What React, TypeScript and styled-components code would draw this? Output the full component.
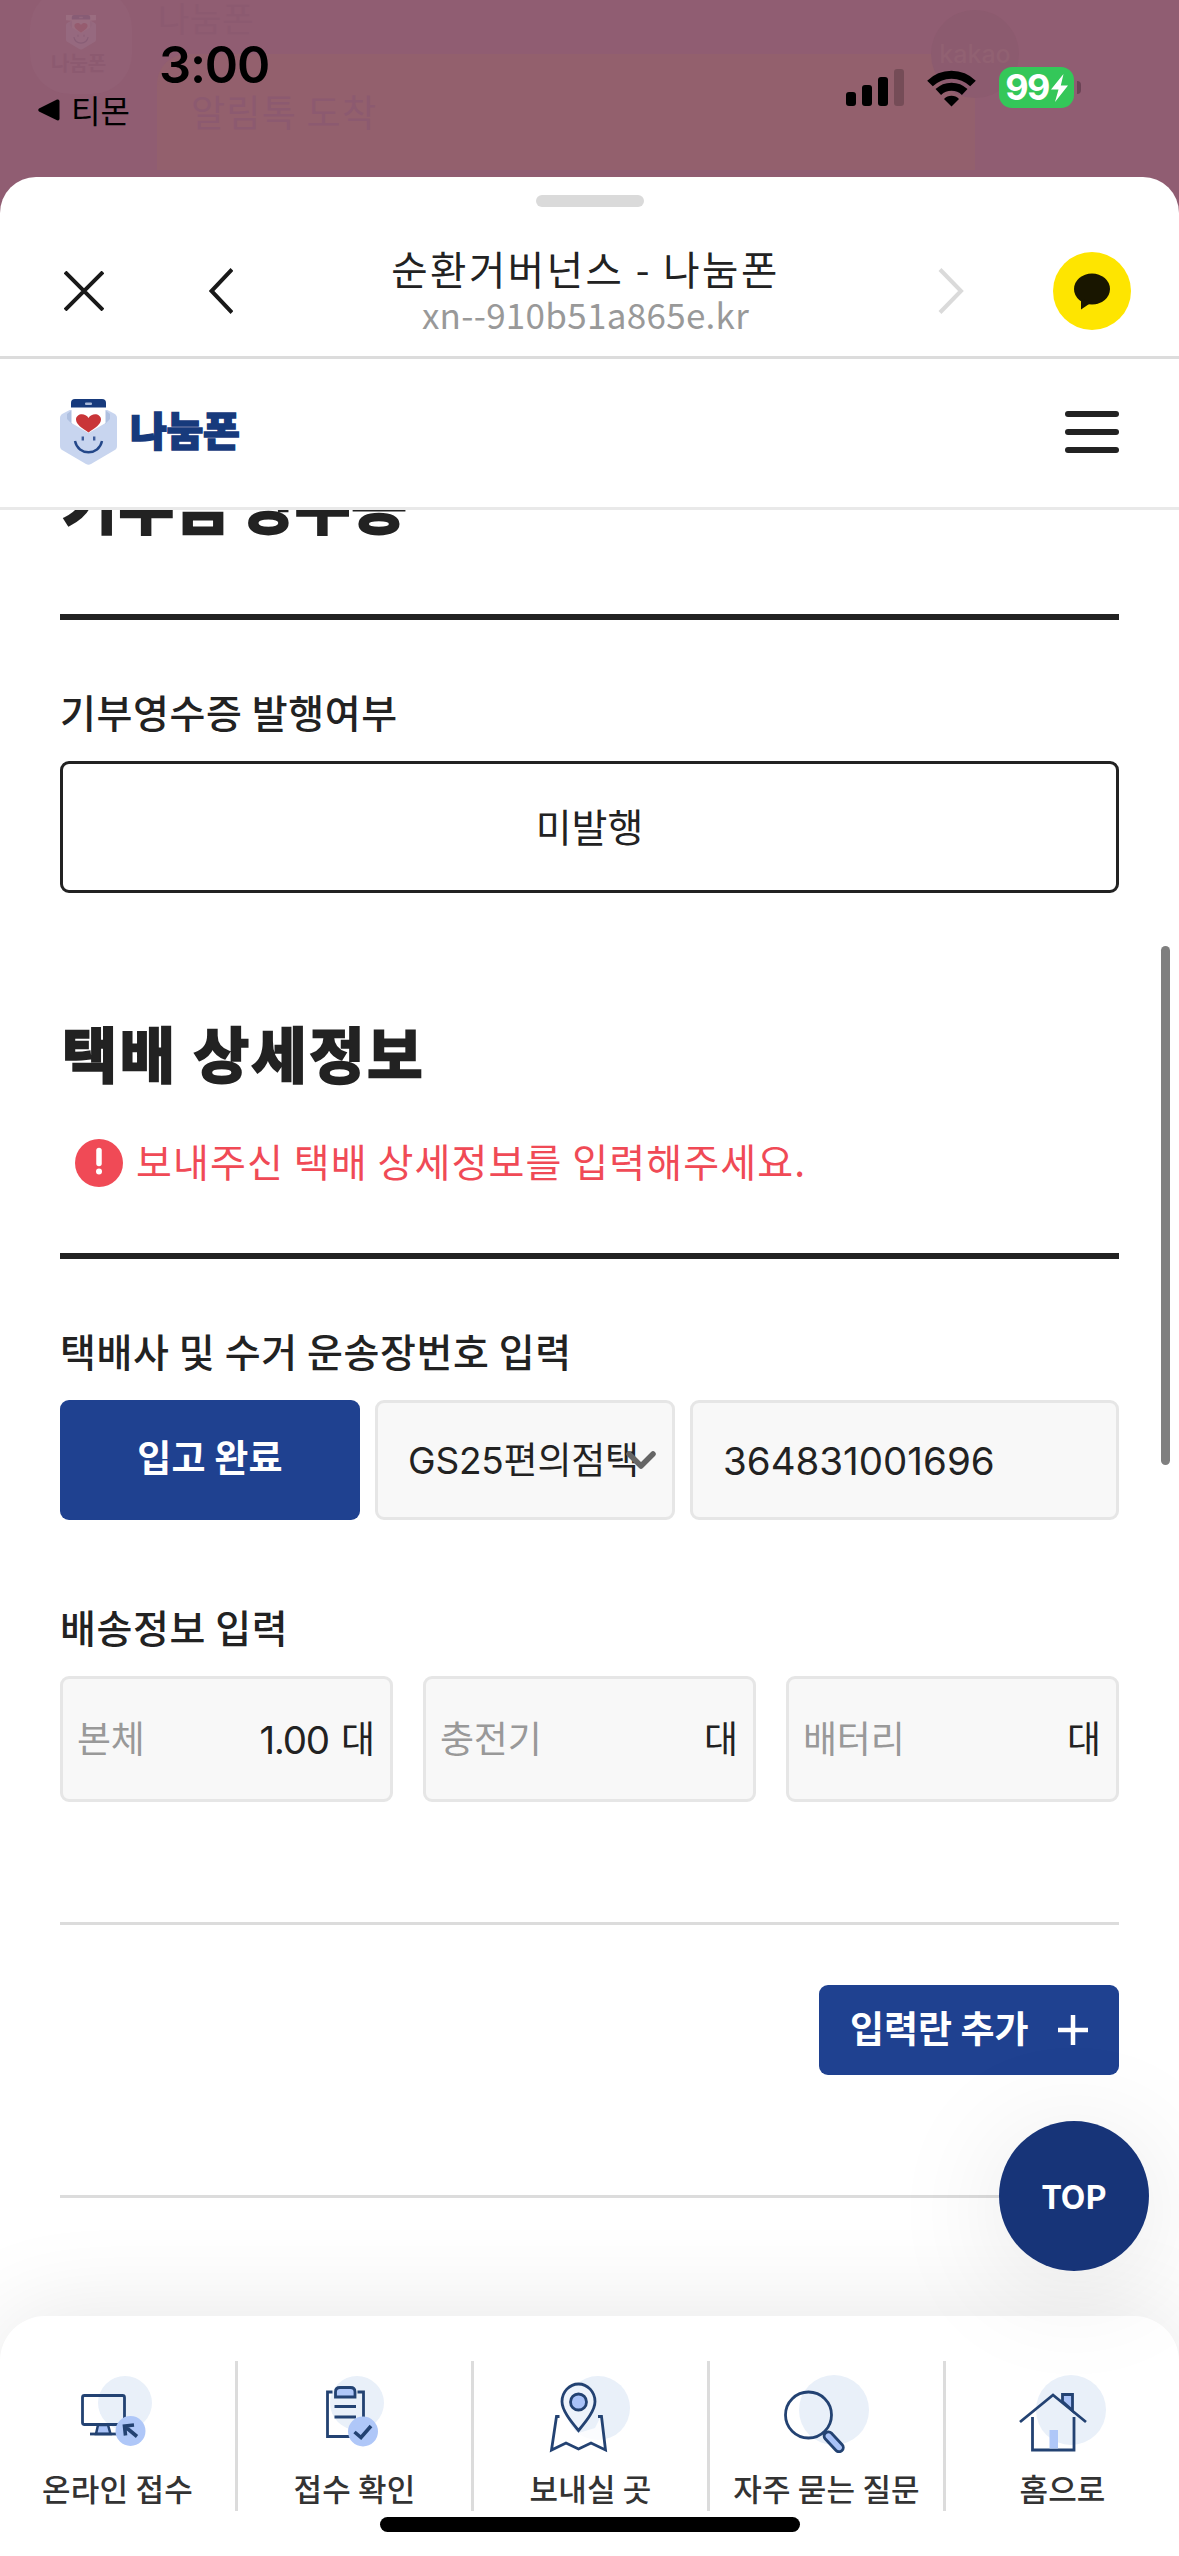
import React from "react";
import styled, { createGlobalStyle } from "styled-components";

const NAVY = "#1f4190";
const INK = "#222222";
const LINE = "#dcdcdc";
const KR = `"Noto Sans CJK KR", "Noto Sans", sans-serif`;
const MIX = `Inter, "Noto Sans CJK KR", sans-serif`;

const GlobalStyle = createGlobalStyle`
  * { box-sizing: border-box; }
  body { margin: 0; background: #905d72; }
  button { font: inherit; border: 0; padding: 0; }
`;

const Screen = styled.div`
  position: relative;
  width: 1179px;
  height: 2556px;
  overflow: hidden;
  background: #905d72;
  color: ${INK};
  font-family: ${KR};
`;

/* Dimmed chat visible behind the sheet */
const Backdrop = styled.div`
  position: absolute;
  inset: 0 0 auto 0;
  height: 260px;
`;
const GhostCard = styled.div`
  position: absolute;
  left: 157px;
  top: 62px;
  width: 818px;
  height: 108px;
  background: #93606d;
  border-radius: 30px 0 0 0;
  box-shadow: 0 -8px 0 #93606d;
`;
const GhostAvatar = styled.div`
  position: absolute;
  left: 30px;
  top: -12px;
  width: 102px;
  height: 106px;
  border-radius: 40px;
  background: #926075;
  svg { position: absolute; left: 36px; top: 27px; opacity: 0.08; }
`;
const GhostBadge = styled.div`
  position: absolute;
  left: 931px;
  top: 10px;
  width: 88px;
  height: 88px;
  border-radius: 50%;
  background: #8c5b6f;
  color: #916172;
  font: 500 25px/88px ${MIX};
  text-align: center;
`;
const GhostText = styled.div<{ $x: number; $y: number; $size: number; $gap?: number; $bold?: boolean }>`
  position: absolute;
  left: ${(p) => p.$x}px;
  top: ${(p) => p.$y}px;
  font-size: ${(p) => p.$size}px;
  line-height: 1;
  font-weight: ${(p) => (p.$bold ? 700 : 400)};
  letter-spacing: ${(p) => p.$gap ?? 0}px;
  color: #8c5a70;
  white-space: nowrap;
`;

const StatusBar = styled.header`
  position: relative;
  height: 177px;
  display: flex;
  justify-content: space-between;
  padding: 0 98px 0 38px;
  color: #000;
`;
const StatusLeft = styled.div`
  display: flex;
  flex-direction: column;
  padding-top: 40px;
`;
const Clock = styled.div`
  padding-left: 121px;
  font: 600 50.5px/50px Inter, sans-serif;
  letter-spacing: -1.2px;
`;
const BackApp = styled.div`
  display: flex;
  align-items: center;
  gap: 11px;
  height: 40px;
  font-size: 32px;
  line-height: 38px;
  span { margin-top: -3px; }
`;
const StatusRight = styled.div`
  display: flex;
  align-items: flex-start;
  padding-top: 67px;
`;
const Signal = styled.div`
  display: flex;
  align-items: flex-end;
  gap: 6px;
  height: 39px;
  margin-right: 22px;
`;
const Bar = styled.i<{ $h: number; $dim?: boolean }>`
  width: 10px;
  height: ${(p) => p.$h}px;
  border-radius: 3px;
  background: #000;
  opacity: ${(p) => (p.$dim ? 0.2 : 1)};
`;
const Battery = styled.div`
  display: flex;
  align-items: center;
  justify-content: center;
  gap: 2px;
  width: 75px;
  height: 41px;
  margin-left: 22px;
  border-radius: 13px;
  background: #34c759;
  color: #fff;
  font: 700 36px/41px Inter, sans-serif;
  letter-spacing: -1.6px;
`;
const BatteryTip = styled.i`
  width: 4px;
  height: 13px;
  margin: 14px 0 0 3px;
  border-radius: 0 4px 4px 0;
  background: #6b4355;
`;

const Sheet = styled.main`
  position: relative;
  height: 2379px;
  background: #fff;
  border-radius: 36px 36px 0 0;
  overflow: hidden;
`;
const BrowserBar = styled.div`
  height: 182px;
  border-bottom: 3px solid ${LINE};
  display: flex;
  flex-direction: column;
`;
const Handle = styled.div`
  width: 108px;
  height: 12px;
  margin: 18px auto 0 536px;
  flex: none;
  border-radius: 6px;
  background: #dadada;
`;
const BrowserRow = styled.div`
  display: grid;
  grid-template-columns: 40px 105px 24px 1fr 26px 89px 77px;
  grid-template-rows: 78px;
  align-items: center;
  height: 78px;
  margin-top: 45px;
  padding: 0 49px 0 64px;
`;
const Titles = styled.div`
  text-align: center;
  margin-top: -3px;
  white-space: nowrap;
`;
const PageTitle = styled.div`
  font-size: 39.5px;
  line-height: 48px;
  letter-spacing: 2.5px;
`;
const PageUrl = styled.div`
  font-family: "Noto Sans CJK KR", sans-serif;
  font-size: 35px;
  line-height: 44px;
  letter-spacing: 0.3px;
  color: #999;
`;
const ShareButton = styled.button`
  display: block;
  width: 78px;
  height: 78px;
  border-radius: 50%;
  background: #fee500;
`;

const SiteHeader = styled.div`
  display: flex;
  align-items: center;
  justify-content: space-between;
  height: 151px;
  padding: 0 60px 3px;
  border-bottom: 3px solid #e9e9e9;
`;
const Brand = styled.div`
  display: flex;
  align-items: center;
  gap: 13px;
`;
const BrandName = styled.span`
  font-size: 40px;
  line-height: 60px;
  font-weight: 900;
  color: #173a7c;
  -webkit-text-stroke: 1.5px #173a7c;
  letter-spacing: -0.3px;
  margin-top: -5px;
`;
const MenuButton = styled.div`
  display: flex;
  flex-direction: column;
  gap: 12px;
  width: 54px;
  i { height: 6px; border-radius: 3px; background: ${INK}; }
`;

const Content = styled.div`
  height: 2046px;
  padding: 0 60px;
  overflow: hidden;
`;
const Heading = styled.h2<{ $top: number; $gap: number; $word?: number }>`
  margin: ${(p) => p.$top}px 0 0;
  padding-left: 2px;
  font-size: 60px;
  line-height: 60px;
  font-weight: 700;
  letter-spacing: ${(p) => p.$gap}px;
  word-spacing: ${(p) => p.$word ?? 0}px;
  -webkit-text-stroke: 2.5px ${INK};
  paint-order: stroke fill;
  stroke-linejoin: round;
`;
const Rule = styled.hr<{ $top: number; $strong?: boolean }>`
  height: ${(p) => (p.$strong ? 6 : 3)}px;
  margin: ${(p) => p.$top}px 0 0;
  border: 0;
  background: ${(p) => (p.$strong ? INK : LINE)};
`;
const Label = styled.div<{ $top: number }>`
  margin: ${(p) => p.$top}px 0 17px;
  height: 60px;
  font: 500 39px/54px ${KR};
  letter-spacing: 0.6px;
  white-space: nowrap;
`;
const Choice = styled.div`
  display: flex;
  align-items: center;
  justify-content: center;
  height: 132px;
  border: 3px solid ${INK};
  border-radius: 9px;
  font-size: 39px;
  line-height: 50px;
  padding-bottom: 5px;
`;
const Notice = styled.div`
  display: flex;
  align-items: center;
  gap: 13px;
  height: 48px;
  margin-top: 57px;
  padding-left: 15px;
  color: #f04a56;
  font-size: 39px;
  letter-spacing: 1.1px;
  white-space: nowrap;
  span { margin-top: -7px; }
`;
const Row = styled.div<{ $columns: string; $gap: number; $height: number }>`
  display: grid;
  grid-template-columns: ${(p) => p.$columns};
  gap: ${(p) => p.$gap}px;
  height: ${(p) => p.$height}px;
`;
const Primary = styled.button`
  display: flex;
  align-items: center;
  justify-content: center;
  border-radius: 9px;
  background: ${NAVY};
  color: #fff;
  font: 700 37px/48px ${KR};
  letter-spacing: 0.2px;
  padding-bottom: 8px;
`;
const Field = styled.div<{ $pad: number }>`
  display: flex;
  align-items: center;
  padding: 2px ${(p) => p.$pad}px 0;
  border: 3px solid #e6e6e6;
  border-radius: 9px;
  background: #f8f8f8;
  font: 400 37px/48px ${MIX};
  white-space: nowrap;
`;
const Selected = styled.span`
  letter-spacing: -0.2px;
`;
const SelectArrow = styled.svg`
  flex: none;
  margin-left: -13px;
`;
const Digits = styled.span<{ $gap: number }>`
  font-size: 38.5px;
  letter-spacing: ${(p) => p.$gap}px;
`;
const Hint = styled.span`
  flex: 1;
  color: #999;
  letter-spacing: -0.2px;
`;
const Unit = styled.span`
  margin: 0 1px 0 12px;
`;
const AddRow = styled.div`
  display: flex;
  justify-content: flex-end;
  margin-top: 60px;
`;
const AddButton = styled.button`
  display: flex;
  align-items: center;
  justify-content: space-between;
  width: 300px;
  height: 90px;
  padding: 0 31px;
  border-radius: 9px;
  background: ${NAVY};
  color: #fff;
  font: 700 37px/48px ${KR};
  white-space: nowrap;
  span { margin-top: -6px; }
`;

const ScrollThumb = styled.div`
  position: absolute;
  right: 9px;
  top: 946px;
  width: 9px;
  height: 519px;
  border-radius: 5px;
  background: #7f7f7f;
`;
const TopButton = styled.button`
  position: absolute;
  right: 30px;
  top: 2121px;
  width: 150px;
  height: 150px;
  border-radius: 50%;
  background: #173478;
  box-shadow: 0 15px 120px rgba(0, 0, 0, 0.1);
  color: #fff;
  font: 700 32.5px/148px "Noto Sans CJK KR", sans-serif;
  letter-spacing: -0.4px;
  padding-bottom: 2px;
`;
const TabBar = styled.nav`
  position: absolute;
  left: 0;
  right: 0;
  bottom: 0;
  height: 240px;
  padding-top: 45px;
  display: grid;
  grid-template-columns: 238px 236px 236px 236px 233px;
  background: #fff;
  border-radius: 45px 45px 0 0;
  box-shadow: 0 0 100px rgba(0, 0, 0, 0.1);
`;
const Tab = styled.div<{ $shift: number }>`
  display: flex;
  flex-direction: column;
  align-items: center;
  height: 150px;
  border-right: 3px solid ${LINE};
  color: #333;
  font: 500 31px/44px ${KR};
  letter-spacing: 0.2px;
  white-space: nowrap;
  &:last-child { border-right: 0; }
  svg { flex: none; align-self: flex-start; width: 110px; height: 80px; margin: 12px 0 13px ${(p) => p.$shift}px; }
`;
const HomeIndicator = styled.div`
  position: absolute;
  left: 380px;
  bottom: 24px;
  width: 420px;
  height: 15px;
  border-radius: 8px;
  background: #000;
`;

const Wifi = () => (
  <svg width="51" height="38" viewBox="0 0 51 38" style={{ marginTop: 2 }}>
    <path d="M4 14.500A30.500 30.500 0 0 1 47 14.500" fill="none" stroke="#000" strokeWidth="8" />
    <path d="M12.300 23A19 19 0 0 1 38.700 23" fill="none" stroke="#000" strokeWidth="8" />
    <path d="M25.500 37.500 18 30a10.500 10.500 0 0 1 15 0z" />
  </svg>
);

const Logo = ({ width = 57 }: { width?: number }) => (
  <svg width={width} height={(width * 66) / 57} viewBox="0 0 57 66">
    <path d="M0 19Q0 16 3 14.500L25 3Q28.500 1 32 3L54 14.500Q57 16 57 19V47Q57 50 54 51.500L31 65Q28.500 66.500 26 65L3 51.500Q0 50 0 47Z" fill="#c8d5ef" />
    <path d="M0 0H57V10L46 11 11 11 0 10Z" fill="#fff" />
    <path d="M7 15 12 11V25L7 20ZM50 15 45 11V25L50 20Z" fill="#afc0e0" />
    <path d="M11.500 8H45.500V24L28.500 34 11.500 24Z" fill="#fff" />
    <path d="M11 8.500V4Q11 0 15 0H42Q46 0 46 4V8.500Z" fill="#173a7c" />
    <rect x="25" y="3.500" width="7" height="2.500" rx="1" fill="#a9b9d8" />
    <path d="M28.500 33.500C22 29 16 25.500 16 20.500C16 14.500 25 13 28.500 19C32 13 41 14.500 41 20.500C41 25.500 35 29 28.500 33.500Z" fill="#c93538" />
    <path d="M22.800 37.500V41.500M34.200 37.500V41.500" stroke="#3d5c9c" strokeWidth="2.400" />
    <path d="M15 42C18 57 39 57 42 42" fill="none" stroke="#234789" strokeWidth="2.400" />
  </svg>
);

const stroke = { fill: "none", stroke: "#234272", strokeWidth: 2.8 } as const;

/* Tab icons share a 110x80 box whose top edge touches the pale disc */
const OnlineIcon = () => (
  <svg viewBox="0 0 110 80">
    <circle cx="54" cy="30" r="27" fill="#e9f0f9" />
    <rect x="11.500" y="22.500" width="42" height="29" rx="2" {...stroke} />
    <path d="M27 52H37L39.500 61H25Z" fill="#a9c2f7" stroke="#234272" strokeWidth="2.500" />
    <path d="M19 61H46" {...stroke} />
    <circle cx="59.500" cy="58" r="15" fill="#afc7f8" />
    <path d="M66 63.500 54 53.500M63 52 53.500 53 54.500 62.500" {...stroke} strokeWidth={3.6} />
  </svg>
);
const CheckIcon = () => (
  <svg viewBox="0 0 110 80">
    <circle cx="49" cy="30" r="27" fill="#e9f0f9" />
    <path d="M24.500 19H19.500V63.500H44M49.500 19H55.500V45" {...stroke} />
    <path d="M27.500 24V19Q27.500 14.500 32 14.500H42.500Q47 14.500 47 19V24Z" fill="#afc7f8" stroke="#234272" strokeWidth="2.800" />
    <path d="M26.500 33.500H48M26.500 44H48" {...stroke} />
    <circle cx="55" cy="58.500" r="15" fill="#afc7f8" />
    <path d="M46.500 59 53 64.500 63 53" {...stroke} strokeWidth={3.6} />
  </svg>
);
const MapIcon = () => (
  <svg viewBox="0 0 110 80">
    <circle cx="58" cy="35" r="32" fill="#e9f0f9" />
    <path d="M16.500 43 11.500 78 25 71 38.500 77.500 52 71 65.500 78 61 43 55 55 38.500 60 22 55Z" fill="#fff" opacity="0.8" />
    <path d="M19.500 43.500H16.500L11.500 77 26 70 38.500 76 51 70 65.500 77 61.500 43.500H58" {...stroke} />
    <path d="M38.500 57.500C32 49.500 22 38 22 28.500A16.500 17.500 0 0 1 55 28.500C55 38 45 49.500 38.500 57.500Z" fill="#edf3fb" stroke="#234272" strokeWidth="2.800" />
    <circle cx="38.500" cy="29" r="8" fill="#a9c2f7" stroke="#234272" strokeWidth="2.800" />
  </svg>
);
const SearchIcon = () => (
  <svg viewBox="0 0 110 80">
    <circle cx="60" cy="37" r="35" fill="#e9f0f9" />
    <circle cx="34.500" cy="42" r="23" {...stroke} />
    <rect x="-4.200" y="0" width="8.400" height="24" rx="4" transform="translate(51.500 60) rotate(-43)" fill="#a9c2f7" stroke="#234272" strokeWidth="2.800" />
  </svg>
);
const HomeIcon = () => (
  <svg viewBox="0 0 110 80">
    <circle cx="62" cy="37" r="35" fill="#e9f0f9" />
    <path d="M53.500 22V21.500H63.500V37.500L53.500 28.500Z" fill="#a9c2f7" stroke="#234272" strokeWidth="2.800" />
    <path d="M11 49 44 22 77 49" {...stroke} />
    <path d="M23.500 44V77H65V44" {...stroke} />
    <rect x="40.500" y="57" width="8.500" height="18.500" fill="#afc7f8" />
  </svg>
);

const tabs = [
  { label: "온라인 접수", shift: 71, Icon: OnlineIcon },
  { label: "접수 확인", shift: 70, Icon: CheckIcon },
  { label: "보내실 곳", shift: 66, Icon: MapIcon },
  { label: "자주 묻는 질문", shift: 64, Icon: SearchIcon },
  { label: "홈으로", shift: 63, Icon: HomeIcon },
];

const parts = [
  { name: "본체", amount: "1.00" },
  { name: "충전기", amount: "" },
  { name: "배터리", amount: "" },
];

export default function App() {
  return (
    <>
      <GlobalStyle />
      <Screen>
        <Backdrop>
          <GhostCard />
          <GhostAvatar>
            <Logo width={30} />
          </GhostAvatar>
          <GhostBadge>kakao</GhostBadge>
          <GhostText $x={158} $y={1} $size={34} $gap={0.8}>나눔폰</GhostText>
          <GhostText $x={51} $y={53} $size={20} $bold>나눔폰</GhostText>
          <GhostText $x={191} $y={93} $size={37} $gap={1.3}>알림톡 도착</GhostText>
        </Backdrop>
        <StatusBar>
          <StatusLeft>
            <Clock>3:00</Clock>
            <BackApp>
              <svg width="22" height="22" viewBox="0 0 22 22">
                <path d="M1 9.500 19 .6Q21.500 0 21.500 2.500V19.500Q21.500 22 19 21.300L1 12.500Q-.5 11 1 9.500Z" />
              </svg>
              <span>티몬</span>
            </BackApp>
          </StatusLeft>
          <StatusRight>
            <Signal>
              <Bar $h={14} />
              <Bar $h={21} />
              <Bar $h={29} />
              <Bar $h={37} $dim />
            </Signal>
            <Wifi />
            <Battery>
              99
              <svg width="17" height="28" viewBox="0 0 17 28">
                <path d="M12.500 0 0 15.500H7.500L4 28 17 11.500H9.800Z" fill="#fff" />
              </svg>
            </Battery>
            <BatteryTip />
          </StatusRight>
        </StatusBar>

        <Sheet>
          <BrowserBar>
            <Handle />
            <BrowserRow>
              <svg width="40" height="40" viewBox="0 0 40 40">
                <path d="M1 1 39 39M39 1 1 39" stroke="#191919" strokeWidth="4" />
              </svg>
              <span />
              <svg width="24" height="46" viewBox="0 0 24 46">
                <path d="M23 1.500 2.500 23 23 44.500" fill="none" stroke="#191919" strokeWidth="4" />
              </svg>
              <Titles>
                <PageTitle>순환거버넌스 - 나눔폰</PageTitle>
                <PageUrl>xn--910b51a865e.kr</PageUrl>
              </Titles>
              <svg width="26" height="46" viewBox="0 0 26 46">
                <path d="M2 1.500 23 23 2 44.500" fill="none" stroke="#dadada" strokeWidth="4" />
              </svg>
              <span />
              <ShareButton>
                <svg width="78" height="78" viewBox="0 0 78 78">
                  <ellipse cx="39" cy="37" rx="18" ry="15.500" fill="#191600" />
                  <path d="M28 47V57.500L39 50Z" fill="#191600" />
                </svg>
              </ShareButton>
            </BrowserRow>
          </BrowserBar>
          <SiteHeader>
            <Brand>
              <Logo />
              <BrandName>나눔폰</BrandName>
            </Brand>
            <MenuButton>
              <i />
              <i />
              <i />
            </MenuButton>
          </SiteHeader>

          <Content>
            <Heading $top={-37} $gap={1.5} $word={-9}>기부금 영수증</Heading>
            <Rule $top={81} $strong />
            <Label $top={64}>기부영수증 발행여부</Label>
            <Choice>미발행</Choice>

            <Heading $top={129} $gap={2.6}>택배 상세정보</Heading>
            <Notice>
              <svg width="48" height="48" viewBox="0 0 48 48">
                <circle cx="24" cy="24" r="24" fill="#f04a56" />
                <path d="M24 11.500V24.500" stroke="#fff" strokeWidth="5.500" strokeLinecap="round" />
                <circle cx="24" cy="32.500" r="3" fill="#fff" />
              </svg>
              <span>보내주신 택배 상세정보를 입력해주세요.</span>
            </Notice>
            <Rule $top={66} $strong />

            <Label $top={64}>택배사 및 수거 운송장번호 입력</Label>
            <Row $columns="300px 300px 1fr" $gap={15} $height={120}>
              <Primary>입고 완료</Primary>
              <Field $pad={30}>
                <Selected>GS25편의점택</Selected>
                <SelectArrow width="30" height="20" viewBox="0 0 30 20">
                  <path d="M3 3 15 15 27 3" fill="none" stroke="#666" strokeWidth="5.500" strokeLinecap="round" strokeLinejoin="round" />
                </SelectArrow>
              </Field>
              <Field $pad={30}>
                <Digits $gap={0}>364831001696</Digits>
              </Field>
            </Row>

            <Label $top={79}>배송정보 입력</Label>
            <Row $columns="1fr 1fr 1fr" $gap={30} $height={126}>
              {parts.map((part) => (
                <Field key={part.name} $pad={14}>
                  <Hint>{part.name}</Hint>
                  <Digits $gap={-1.2}>{part.amount}</Digits>
                  <Unit>대</Unit>
                </Field>
              ))}
            </Row>

            <Rule $top={120} />
            <AddRow>
              <AddButton>
                <span>입력란 추가</span>
                <svg width="30" height="30" viewBox="0 0 30 30">
                  <path d="M15 0V30M0 15H30" stroke="#fff" strokeWidth="4.500" />
                </svg>
              </AddButton>
            </AddRow>
            <Rule $top={120} />
          </Content>
        </Sheet>

        <ScrollThumb />
        <TabBar>
          {tabs.map(({ label, shift, Icon }) => (
            <Tab key={label} $shift={shift}>
              <Icon />
              {label}
            </Tab>
          ))}
        </TabBar>
        <TopButton>TOP</TopButton>
        <HomeIndicator />
      </Screen>
    </>
  );
}
